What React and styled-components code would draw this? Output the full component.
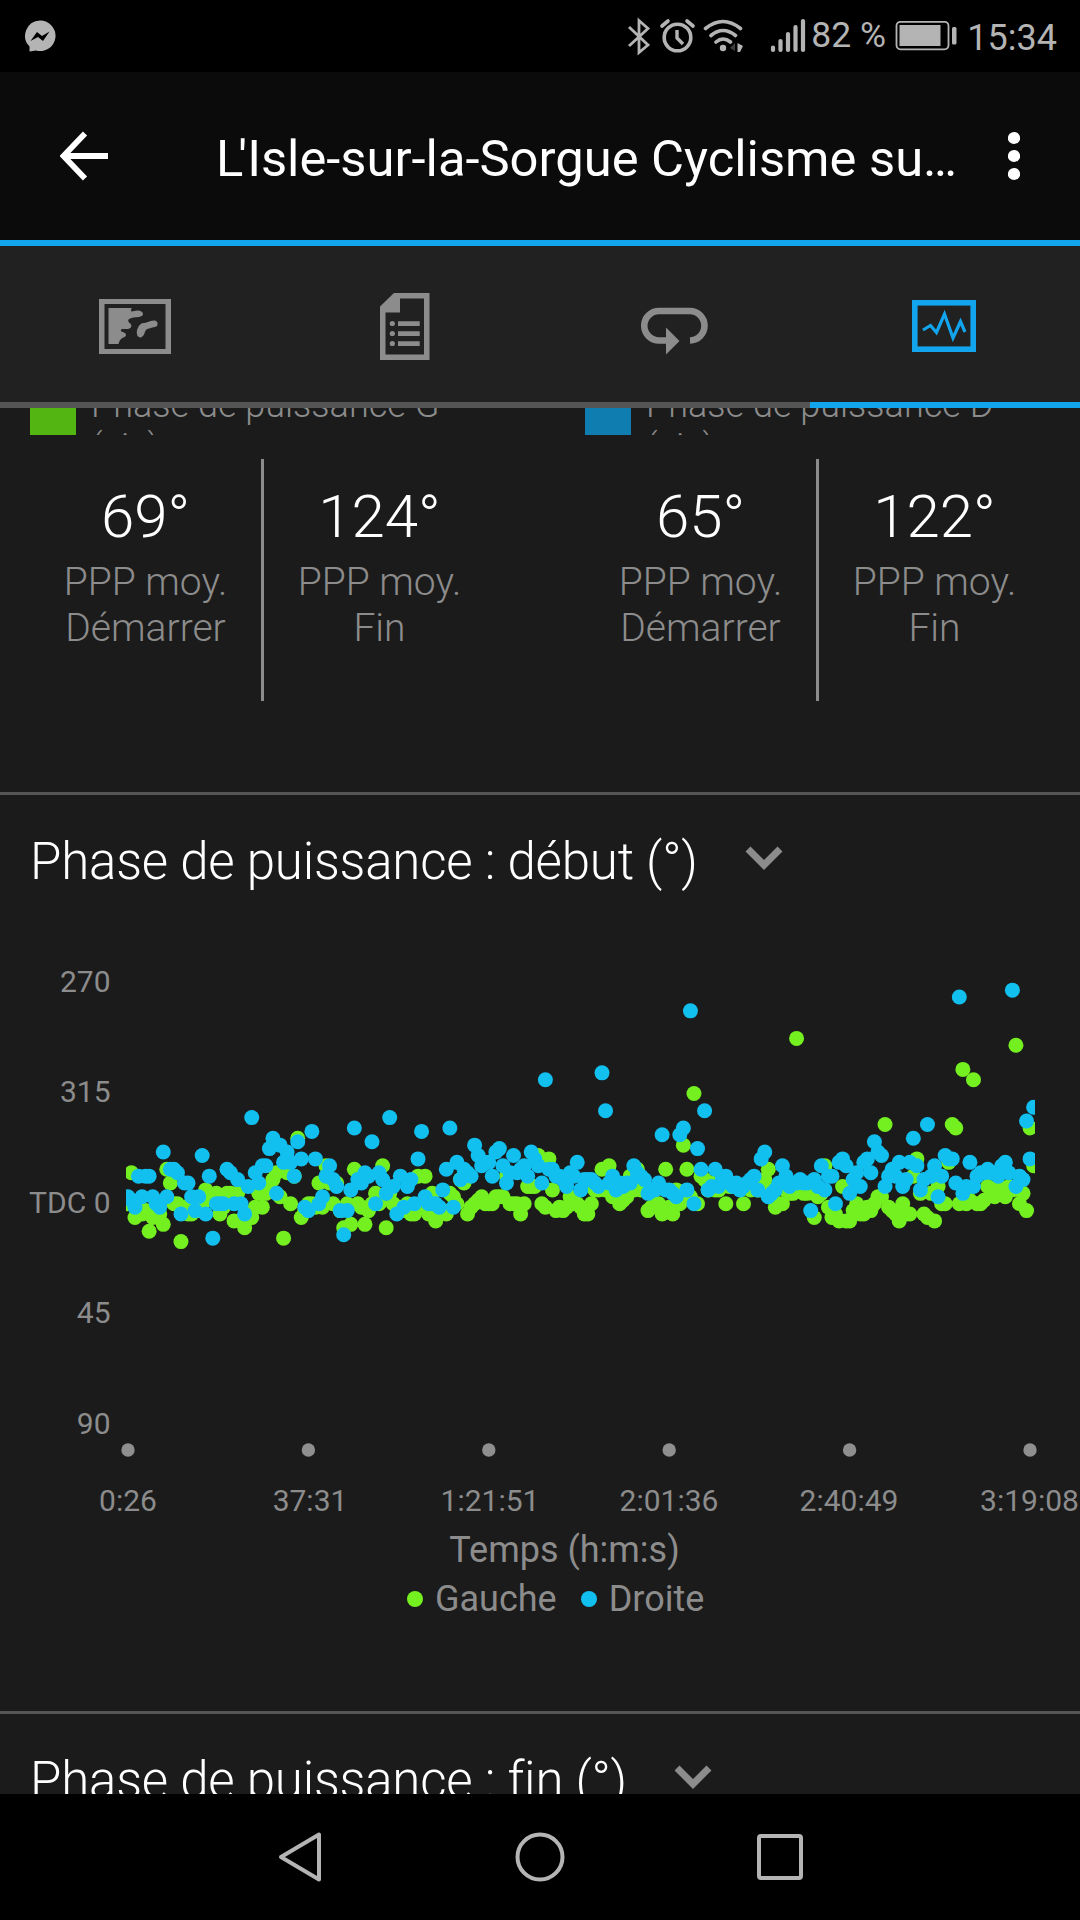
import React from "react";
import styled, { createGlobalStyle } from "styled-components";

// one sample per step along the ride, in crank sensor steps above TDC
const LEFT = [
  0, 9, -4, -2, -3, -2, -8, -4, -3, -3, -6, 10, 6, 0, 0, -11, -1, -3, -3, 0,
  -2, 0, 4, 2, 1, 3, -3, -1, 3, 3, -5, 3, -5, -7, -4, -4, -1, 3, -1, 3,
  5, 7, 9, 2, -10, 9, 0, 8, 19, -4, -2, 0, 0, -1, 6, -1, 11, 6, 0, 6,
  -2, -7, 0, -6, 10, 0, -1, -6, -2, 0, 3, 0, 11, -7, 3, 0, -1, -1, -2, 0,
  -3, -3, 8, -1, 8, -3, 3, -5, -3, -2, -3, 3, 2, 0, 7, 6, -3, -1, 0, 1,
  2, 0, 0, 0, 2, 2, 2, 8, 0, 0, 0, -3, 0, 5, 5, 5, 14, 0, -1, 13,
  4, -2, -1, -2, -1, 2, 0, 0, -1, -3, -3, 0, 4, 4, 10, 4, 11, 2, 2, 0,
  1, 2, 8, 4, 10, 4, 4, -2, -1, 0, 0, -3, 10, -1, -3, 4, 0, 17, 10, 2,
  32, 0, 8, 7, 4, 6, 4, 4, 5, 0, 5, 5, 5, 5, 0, 5, 4, 5, 4, 4,
  7, 10, 4, -1, 0, 0, 4, 3, 3, 48, 4, 3, 3, 4, -4, 2, 3, 11, -1, -4,
  -3, -5, 5, -5, -5, -2, 0, -3, -3, -1, -2, 0, 2, 2, 23, -1, -2, -3, -5, 0,
  -3, -3, 8, 13, 3, -3, -4, 3, -5, 5, 0, 0, 12, 23, 22, 0, 39, 0, 1, 36,
  0, 0, 1, 5, 4, 2, 5, 4, 2, 5, 4, 46, 0, 3, -2, 22, 11,
];

const RIGHT = [
  2, 1, -1, 8, 2, 8, 8, 2, 0, -1, 15, 2, 10, 10, 9, -3, 6, 6, 2, -2,
  2, 14, -3, 8, -10, 0, 0, 0, 10, 9, 0, 7, 0, -3, 5, 25, 9, 6, 11, 11,
  16, 19, 3, 17, 12, 15, 12, 8, 18, 13, -1, -2, 21, 13, 0, 2, 8, 11, 7, 5,
  -2, -9, -2, 4, 22, 7, 6, 9, 8, 18, 0, 9, 7, 3, 25, 5, -3, 8, -1, 5,
  7, 0, 13, 21, 2, 0, 0, 0, -1, 4, 10, 22, -1, 12, 7, 10, 9, 8, 17, 14,
  11, 12, 12, 8, 15, 16, 11, 6, 9, 14, 9, 10, 11, 8, 15, 13, 11, 6, 36, 10,
  10, 8, 8, 7, 5, 9, 8, 12, 4, 7, 7, 7, 6, 5, 38, 27, 6, 8, 4, 6,
  5, 6, 6, 11, 9, 8, 7, 3, 4, 4, 6, 20, 4, 4, 3, 2, 20, 22, 4, 56,
  0, 16, 10, 27, 4, 5, 10, 5, 7, 8, 6, 5, 6, 4, 5, 6, 7, 8, 4, 13,
  15, 2, 3, 4, 6, 11, 8, 5, 6, 6, 7, 6, 6, -2, 7, 5, 11, 4, 8, 8,
  0, 12, 13, 11, 3, 7, 9, 5, 12, 13, 9, 18, 15, 14, 5, 8, 10, 8, 12, 5,
  7, 12, 19, 11, 4, 7, 23, 8, 11, 2, 8, 14, 13, 13, 6, 60, 3, 5, 12, 5,
  8, 9, 9, 10, 9, 9, 8, 11, 12, 9, 62, 5, 8, 7, 24, 13, 28,
];

const Y_LABELS = ["270", "315", "TDC 0", "45", "90"];
const X_LABELS = [
  ["0:26", 128],
  ["37:31", 310],
  ["1:21:51", 490],
  ["2:01:36", 669],
  ["2:40:49", 849],
  ["3:19:08", 1029.5],
];

const Dots = ({ data, color }) => (
  <g fill={color} clipPath="url(#plot)">
    {data.map((v, i) => (
      <circle key={i} cx={127.9 + i * 3.538} cy={303.7 - v * 3.444} r="7.5" />
    ))}
  </g>
);

const PhaseChart = () => (
  <Plot viewBox="0 0 1080 628">
    <clipPath id="plot">
      <rect x="126" y="70" width="909" height="460" />
    </clipPath>
    {Y_LABELS.map((label, i) => (
      <AxisText key={label} x="110.5" y={92 + i * 110.4} textAnchor="end">
        {label}
      </AxisText>
    ))}
    <Dots data={LEFT} color="#74f020" />
    <Dots data={RIGHT} color="#12c0f0" />
    {X_LABELS.map(([label, x], i) => (
      <g key={label}>
        <circle cx={128 + i * 180.4} cy="550" r="6.7" fill="#8f8f8f" />
        <AxisText x={x} y="611" textAnchor="middle">
          {label}
        </AxisText>
      </g>
    ))}
  </Plot>
);

const Stat = ({ value, label }) => (
  <StatWrapper>
    <StatValue>{value}</StatValue>
    <StatLabel>
      PPP moy.
      <br />
      {label}
    </StatLabel>
  </StatWrapper>
);

const Side = ({ color, name, start, end }) => (
  <SideWrapper>
    <SideLegend>
      <Swatch $color={color} />
      <SideName>
        Phase de puissance {name}
        <br />
        (cis)
      </SideName>
    </SideLegend>
    <Stats>
      <Stat value={start} label="Démarrer" />
      <StatDivider />
      <Stat value={end} label="Fin" />
    </Stats>
  </SideWrapper>
);

const SectionTitle = ({ children }) => (
  <TitleRow>
    <TitleText>{children}</TitleText>
    <svg width="38" height="25" viewBox="0 0 38 25">
      <path d="M3 3L19 19L35 3" fill="none" stroke="#8c8c8c" strokeWidth="7" />
    </svg>
  </TitleRow>
);

const StatusIcons = () => (
  <svg width="180" height="40" viewBox="627 16 180 40" fill="none" stroke="#b4b4b4">
    {/* bluetooth */}
    <path d="M629 27L648 45L639 52.500V20.500L648 28.500L629 46" strokeWidth="2.800" />
    {/* alarm */}
    <circle cx="677.500" cy="37.500" r="13.300" strokeWidth="3.600" />
    <path d="M677 30V38L683 44" strokeWidth="3.400" />
    <path d="M662 26L668 21M693 26L687 21" strokeWidth="3.600" strokeLinecap="round" />
    {/* wifi */}
    <path
      d="M705.500 28.500Q723 14.500 740.500 28.500M711 35.500Q723 25.500 735.500 35.500M716 42Q723 36 730.500 42"
      strokeWidth="3.600"
      strokeLinecap="round"
    />
    <circle cx="723" cy="48" r="3.200" fill="#b4b4b4" stroke="none" />
    <path d="M730 48L735 43V51Z" fill="#3c3c3c" stroke="none" />
    <path d="M737.500 43L743 46L740 52H737.500Z" fill="#b4b4b4" stroke="none" />
    {/* signal */}
    <path d="M773 47.500V50M780.500 41V50M788 34V50M795.500 27V50M803 21V50" strokeWidth="4.200" strokeLinecap="round" />
  </svg>
);

const App = () => {
  return (
    <Screen>
      <GlobalStyle />
      <StatusBar>
        <svg width="34" height="34" viewBox="0 0 34 34">
          <path d="M17 1.500a15.300 15.300 0 1 1-4 30L6.500 32.500V27.500A15.300 15.300 0 0 1 17 1.500Z" fill="#b4b4b4" />
          <path d="M7.500 22L14 13L19 17L26.500 12.500L20 22L15 18Z" fill="#000" />
        </svg>
        <StatusRight>
          <StatusIcons />
          <Percent>82 %</Percent>
          <svg width="63" height="32" viewBox="0 0 63 32">
            <rect x="1.500" y="1.800" width="52" height="27.500" rx="4" fill="none" stroke="#b4b4b4" strokeWidth="1.800" />
            <rect x="4.500" y="5" width="41" height="21" fill="#b4b4b4" />
            <rect x="57" y="7" width="4.500" height="17.500" rx="1.500" fill="#b4b4b4" />
          </svg>
          <Clock>15:34</Clock>
        </StatusRight>
      </StatusBar>

      <Header>
        <svg width="48" height="50" viewBox="0 0 48 50">
          <path d="M25 2.500L3.500 25L25 47.500M3 25H48" fill="none" stroke="#fff" strokeWidth="5.800" />
        </svg>
        <HeaderTitle>
          <Kern>L</Kern>'Isle-sur-la-Sorgue Cyclisme su…
        </HeaderTitle>
        <svg width="12" height="50" viewBox="0 0 12 50" fill="#fff">
          <circle cx="6" cy="7" r="6.100" />
          <circle cx="6" cy="25" r="6.100" />
          <circle cx="6" cy="43" r="6.100" />
        </svg>
      </Header>

      <Tabs>
        <Tab>
          <svg width="72" height="55" viewBox="0 0 72 55" fill="#8c8c8c">
            <path d="M0 0H72V55H0ZM5.500 5V50H66.500V5Z" fillRule="evenodd" />
            <path d="M9.500 9H32.500V10C31 12 32.500 13 35 12C39 10.500 44 12 44 15C44 18 39 18 35 18.500C30 19 28 21 30 23.500C34 26 32.500 30 28.500 30H23C21 31 21.500 32.500 25 33.500C28 35 27.500 37.500 24.500 38.500C21 40 20.500 42 19.500 45H9.500Z" />
            <path d="M38 35C37 31 40 25 44 24C48 24 50 22 55 21.500C58 21.500 59.500 24 58 27C54 29 49 29 47 31C45 34 45.500 37 42 38.500C39.500 38.500 38 37 38 35Z" />
          </svg>
        </Tab>
        <Tab>
          <svg width="50" height="67" viewBox="0 0 50 67" fill="#8c8c8c">
            <path d="M14 0H49.500V67H0V13.500ZM20 5.500V19.500H5.500V61.500H44V5.500Z" fillRule="evenodd" />
            <circle cx="12.300" cy="30.500" r="2.600" />
            <circle cx="12.300" cy="40.500" r="2.600" />
            <circle cx="12.300" cy="50.500" r="2.600" />
            <path d="M18 28.200H39.700V33H18ZM18 38.200H39.700V43H18ZM18 48.200H39.700V53H18Z" />
          </svg>
        </Tab>
        <Tab>
          <LoopIcon width="68" height="48" viewBox="0.5 0 68 48">
            <path
              d="M27 33.500H18.500A14.700 14.700 0 0 1 18.500 4H49A14.700 14.700 0 0 1 49.500 33.500"
              fill="none"
              stroke="#8c8c8c"
              strokeWidth="6.600"
            />
            <path d="M25.500 20.500L39 34L25.500 47.500Z" fill="#8c8c8c" />
          </LoopIcon>
        </Tab>
        <Tab $active>
          <svg width="66" height="52" viewBox="0 0 66 52" fill="none" stroke="#12a5ee">
            <rect x="2.800" y="2.800" width="58.400" height="46.400" strokeWidth="5.600" />
            <path d="M11 30L18.500 25.500L24.500 32.500L32.500 14L41 38L48.500 21.500L53 32" strokeWidth="3.200" />
          </svg>
        </Tab>
      </Tabs>

      <Content>
        <Summary>
          <Side color="#52b512" name="G" start="69°" end="124°" />
          <Side color="#0f7db0" name="D" start="65°" end="122°" />
        </Summary>

        <Section>
          <SectionTitle>Phase de puissance : début (°)</SectionTitle>
          <PhaseChart />
          <AxisTitle>Temps (h:m:s)</AxisTitle>
          <Legend>
            <LegendItem $color="#74f020">Gauche</LegendItem>
            <LegendItem $color="#12c0f0">Droite</LegendItem>
          </Legend>
        </Section>

        <Section>
          <SectionTitle>Phase de puissance : fin (°)</SectionTitle>
        </Section>
      </Content>

      <NavBar>
        <svg width="46" height="52" viewBox="0 0 46 52">
          <path d="M42 3.500V48.500L4 26Z" fill="none" stroke="#b4b4b4" strokeWidth="4" strokeLinejoin="round" />
        </svg>
        <svg width="50" height="50" viewBox="0 0 50 50">
          <circle cx="25" cy="25" r="22.500" fill="none" stroke="#b4b4b4" strokeWidth="4" />
        </svg>
        <svg width="46" height="46" viewBox="0 0 46 46">
          <rect x="2" y="2" width="42" height="42" rx="2" fill="none" stroke="#b4b4b4" strokeWidth="4" />
        </svg>
      </NavBar>
    </Screen>
  );
};

export default App;

const GlobalStyle = createGlobalStyle`
  body {
    margin: 0;
    background: #000;
    font-family: Roboto, sans-serif;
  }

  svg {
    display: block;
    flex-shrink: 0;
  }
`;

const Screen = styled.div`
  width: 1080px;
  height: 1920px;
  display: flex;
  flex-direction: column;
  overflow: hidden;
`;

const StatusBar = styled.div`
  height: 72px;
  box-sizing: border-box;
  padding: 0 23px;
  display: flex;
  justify-content: space-between;
  align-items: center;
  background: #000;
  color: #b4b4b4;
`;

const StatusRight = styled.div`
  display: flex;
  align-items: center;
`;

const Percent = styled.span`
  width: 84px;
  padding-left: 4px;
  font-size: 35.5px;
  line-height: 42px;
  white-space: nowrap;
  padding-bottom: 2px;
`;

const Clock = styled.span`
  margin-left: 9px;
  font-size: 36px;
  line-height: 42px;
  padding-top: 3px;
`;

const Header = styled.div`
  height: 168px;
  box-sizing: border-box;
  padding: 0 60px;
  display: flex;
  align-items: center;
  background: #0b0b0b;
`;

const HeaderTitle = styled.div`
  flex: 1;
  margin-left: 108px;
  padding-top: 5px;
  color: #fff;
  font-size: 50.7px;
  line-height: 60px;
  white-space: nowrap;
`;

const Kern = styled.span`
  letter-spacing: -5px;
`;

const Tabs = styled.div`
  height: 168px;
  box-sizing: border-box;
  display: flex;
  background: #212121;
  border-top: 6px solid #12a5ee;
`;

const Tab = styled.div`
  flex: 1;
  padding-top: 4px;
  display: flex;
  justify-content: center;
  align-items: center;
  border-bottom: 6px solid ${({ $active }) => ($active ? "#12a5ee" : "#555555")};
`;

const LoopIcon = styled.svg`
  margin-top: 10px;
`;

const Content = styled.div`
  height: 1386px;
  background: #1b1b1b;
  overflow: hidden;
`;

const Summary = styled.div`
  height: 384px;
  padding: 0 30px;
  display: flex;
  gap: 90px;
`;

const SideWrapper = styled.div`
  width: 465px;
`;

/* scrolled: only the bottom of the legend row is left in view */
const SideLegend = styled.div`
  height: 27px;
  display: flex;
  align-items: flex-end;
  overflow: hidden;
`;

const Swatch = styled.div`
  width: 46px;
  height: 27px;
  background: ${({ $color }) => $color};
`;

const SideName = styled.div`
  height: 51px;
  margin-left: 15px;
  color: #8c8c8c;
  font-size: 36px;
  font-weight: 300;
  line-height: 42px;
  white-space: nowrap;
`;

const Stats = styled.div`
  margin-top: 24px;
  display: flex;
`;

const StatDivider = styled.div`
  width: 3px;
  height: 242px;
  background: #8c8c8c;
`;

const StatWrapper = styled.div`
  flex: 1;
  padding-top: 22px;
  text-align: center;
`;

const StatValue = styled.div`
  color: #fff;
  font-size: 60px;
  font-weight: 300;
  line-height: 72px;
`;

const StatLabel = styled.div`
  padding-top: 6px;
  color: #8c8c8c;
  font-size: 39px;
  font-weight: 300;
  line-height: 46px;
`;

const Section = styled.div`
  height: 919px;
  box-sizing: border-box;
  border-top: 3px solid #555555;
`;

const TitleRow = styled.div`
  height: 105px;
  box-sizing: border-box;
  padding: 37px 30px 0;
  display: flex;

  svg {
    margin: 14px 0 0 47px;
  }
`;

const TitleText = styled.div`
  color: #fff;
  font-size: 51px;
  font-weight: 300;
  line-height: 60px;
  letter-spacing: -0.2px;
  white-space: nowrap;
`;

const Plot = styled.svg`
  width: 1080px;
  height: 628px;
`;

const AxisText = styled.text`
  fill: #8c8c8c;
  font-size: 30px;
`;

const AxisTitle = styled.div`
  width: 1129px;
  padding-top: 1px;
  color: #8c8c8c;
  font-size: 36px;
  line-height: 42px;
  text-align: center;
`;

const Legend = styled.div`
  padding: 7px 0 0 407px;
  display: flex;
  gap: 24px;
`;

const LegendItem = styled.div`
  display: flex;
  align-items: center;
  gap: 12px;
  color: #8c8c8c;
  font-size: 36px;
  line-height: 42px;

  &::before {
    content: "";
    width: 16px;
    height: 16px;
    border-radius: 50%;
    background: ${({ $color }) => $color};
  }
`;

const NavBar = styled.div`
  height: 126px;
  display: flex;
  justify-content: center;
  align-items: center;
  gap: 192px;
  background: #000;
`;
